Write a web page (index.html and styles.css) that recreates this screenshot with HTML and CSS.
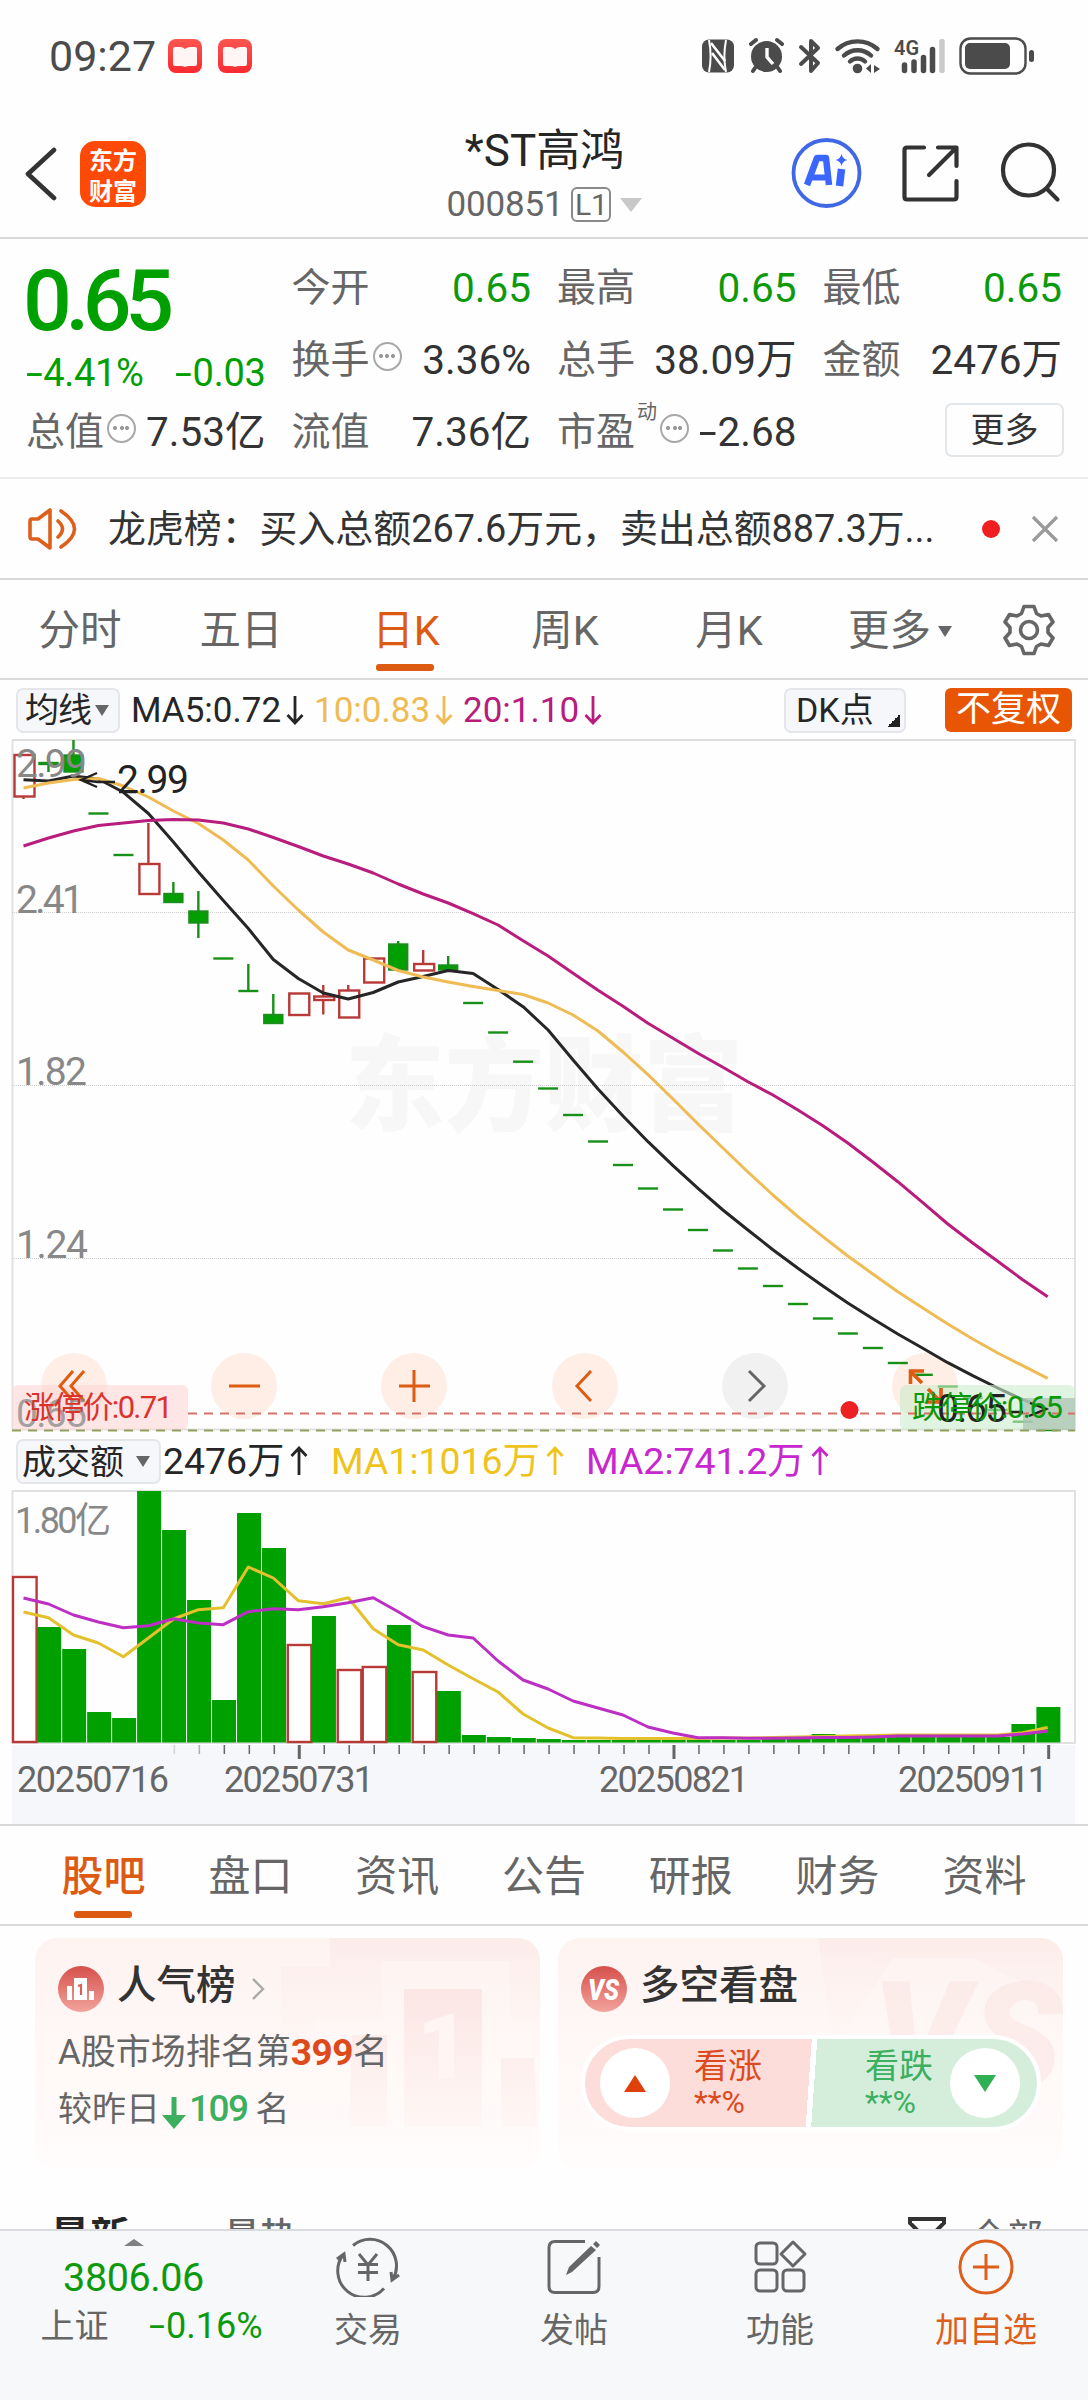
FILE: index.html
```html
<!DOCTYPE html>
<html lang="zh-CN">
<head>
<meta charset="utf-8">
<title>*ST高鸿 000851</title>
<link rel="stylesheet" href="styles.css">
</head>
<body>
<div class="phone">

<div class="status">
  <span class="clock">09:27</span>
  <svg class="notif" viewBox="0 0 84 34" width="84" height="34">
    <defs><linearGradient id="nr" x1="0" y1="0" x2="0" y2="1"><stop offset="0" stop-color="#fb5650"/><stop offset="1" stop-color="#fb2a30"/></linearGradient></defs>
    <g id="book"><rect width="34" height="34" rx="8" fill="url(#nr)"/><path d="M5 10q0-2 2-2h5q3 0 5 2 2-2 5-2h5q2 0 2 2v15q0 2-2 2h-6q-2 0-4 1-2-1-4-1H7q-2 0-2-2z" fill="#fff5f4"/></g>
    <use href="#book" x="50"/>
  </svg>
  <svg class="sysicons" viewBox="702 36 334 40" width="334" height="40" fill="#4b4b4b">
    <rect x="702" y="39.500" width="32" height="33" rx="7"/>
    <path d="M709 40c2 10 2 22 0 32M726 40c-2 10-2 22 0 32" stroke="#fff" stroke-width="2" fill="none"/><path d="M711 43l14 18M712 53l13 17" stroke="#fff" stroke-width="2.600" fill="none"/>
    <circle cx="766.500" cy="56.500" r="15.500"/><path d="M751 44l5-4M782 44l-5-4M755 68l-2 3M778 68l2 3" stroke="#4b4b4b" stroke-width="4" stroke-linecap="round"/><path d="M767 48v9l6 7" stroke="#fff" stroke-width="3.400" fill="none"/>
    <path d="M801 47l17 16-7 8V41l7 7-17 16" fill="none" stroke="#4b4b4b" stroke-width="4" stroke-linejoin="round" stroke-linecap="round"/>
    <g fill="none" stroke="#4b4b4b" stroke-width="4.400" stroke-linecap="round"><path d="M837.500 49a30 30 0 0 1 40 0M844 55.500a20 20 0 0 1 27 0M850 61.500a11 11 0 0 1 15 0"/></g>
    <circle cx="857.500" cy="68.500" r="4.800"/><path d="M871 64v9l-5-4.500zM873.500 64v9M874 65l6 4-6 4z"/>
    <text x="894" y="54.500" class="net" textLength="25" lengthAdjust="spacingAndGlyphs">4G</text>
    <g stroke="#4b4b4b" stroke-width="5.500" stroke-linecap="round"><path d="M904.500 65v5.500M914 62v8.500M923.500 57.500v13M932.500 49.500v21"/><path d="M942 41.500v29" stroke="#cbcbcb"/></g>
    <rect x="960.500" y="38.500" width="65" height="35" rx="10" fill="none" stroke="#4b4b4b" stroke-width="2.400"/><rect x="965" y="43" width="45" height="26" rx="5"/><rect x="1029" y="50" width="5" height="12" rx="2.500"/>
  </svg>
</div>

<header class="head">
  <svg class="back" viewBox="0 0 34 54" width="34" height="54"><path d="M30 3L4 27l26 24" fill="none" stroke="#333" stroke-width="4.600" stroke-linejoin="round" stroke-linecap="round"/></svg>
  <div class="logo"><span>东方</span><span>财富</span></div>
  <div class="title">
    <div class="name">*ST高鸿</div>
    <div class="code"><span>000851</span><i>L1</i><b></b></div>
  </div>
  <svg class="acts" viewBox="790 135 272 76" width="272" height="76" fill="none">
    <circle cx="826.500" cy="172" r="33" stroke="#4068e6" stroke-width="3.800"/>
    <path d="M807 184l10-27h9l3 27" stroke="#3a66ff" stroke-width="6.500" stroke-linejoin="round"/><path d="M812 176.500h16" stroke="#3a66ff" stroke-width="6"/><path d="M841.500 168l-2 17" stroke="#3a66ff" stroke-width="7.500"/><path d="M841.500 153q1 5 6 6-5 1-6 6-1-5-6-6 5-1 6-6z" fill="#3a66ff"/>
    <g stroke="#333" stroke-width="4.200" stroke-linecap="round" stroke-linejoin="round"><path d="M924 146.500h-17q-2.500 0-2.500 2.500v47q0 2.500 2.500 2.500h47q2.500 0 2.500-2.500v-16M938 146.500h18.500V165M955 148l-26 26"/><circle cx="1028.500" cy="169" r="25.500"/><path d="M1047 188l10.500 10.500"/></g>
  </svg>
</header>

<section class="quote">
  <div class="price"><div class="last">0.65</div><div class="chg"><span><u>-</u>4.41%</span><span><u>-</u>0.03</span></div></div>
  <div class="cell"><label>今开</label><span class="g">0.65</span></div>
  <div class="cell"><label>最高</label><span class="g">0.65</span></div>
  <div class="cell"><label>最低</label><span class="g">0.65</span></div>
  <div class="cell"><label>换手<i class="ring"></i></label><span>3.36%</span></div>
  <div class="cell"><label>总手</label><span>38.09万</span></div>
  <div class="cell"><label>金额</label><span>2476万</span></div>
  <div class="cell"><label>总值<i class="ring"></i></label><span>7.53亿</span></div>
  <div class="cell"><label>流值</label><span>7.36亿</span></div>
  <div class="cell"><label>市盈<sup>动</sup><i class="ring"></i></label><span><u>-</u>2.68</span></div>
  <div class="cell morecell"><button class="more">更多</button></div>
</section>

<section class="notice">
  <svg viewBox="0 0 50 44" width="50" height="44" fill="none" stroke="#dd5f1c" stroke-width="3.600" stroke-linejoin="round" stroke-linecap="round"><path d="M22 3v38L10 32H4q-2 0-2-2.500v-15Q2 12 4 12h6zM30 14q9 8 0 16M33 4q27 18 0 36"/></svg>
  <p>龙虎榜：买入总额267.6万元，卖出总额887.3万...</p>
  <i class="dot"></i>
  <svg viewBox="0 0 28 28" width="28" height="28"><path d="M2 2l24 24M26 2L2 26" stroke="#9a9a9a" stroke-width="3.200"/></svg>
</section>

<nav class="periods">
  <span>分时</span><span>五日</span><span class="on">日K</span><span>周K</span><span>月K</span><span>更多<b></b></span>
  <svg viewBox="-27 -27 54 54" width="54" height="54" fill="none" stroke="#666" stroke-width="3.600" stroke-linejoin="round"><circle r="8.500"/><path d="M-5-23.500H5L7.500-16.500 12-14 19.500-15.500 24-8 19-2.500V2.500L24 8 19.500 15.500 12 14 7.500 16.500 5 23.500H-5L-7.500 16.500-12 14-19.500 15.500-24 8-19 2.500V-2.500L-24-8-19.500-15.500-12-14-7.500-16.500z"/></svg>
</nav>

<div class="indicators">
  <button class="chip ma">均线<b></b></button>
  <span class="v1">MA5:0.72<svg class="arr" viewBox="0 0 18 30"><path d="M9 1v27M1.500 20L9 28l7.500-8"/></svg></span>
  <span class="v2">10:0.83<svg class="arr" viewBox="0 0 18 30"><path d="M9 1v27M1.500 20L9 28l7.500-8"/></svg></span>
  <span class="v3">20:1.10<svg class="arr" viewBox="0 0 18 30"><path d="M9 1v27M1.500 20L9 28l7.500-8"/></svg></span>
  <button class="chip dk">DK点<b></b></button>
  <button class="adj">不复权</button>
</div>

<svg class="chart" viewBox="0 739 1088 694" width="1088" height="694">
  <text class="wm" x="345" y="1123" textLength="398" lengthAdjust="spacingAndGlyphs">东方财富</text>
  <g fill="none"><path d="M12.500 740V1431M1075 740V1431" stroke="#e2e2e4" stroke-width="2"/><path d="M12 740H1076M12 1429.500H1076" stroke="#dfdfe1" stroke-width="2"/>
  <path d="M12 912.500H1075M12 1085.500H1075M12 1258.500H1075" stroke="#cfcfcf" stroke-width="1" stroke-dasharray="1 1"/></g>
  <g class="pads">
    <circle cx="74" cy="1386" r="33"/><circle cx="244" cy="1386" r="33"/><circle cx="414" cy="1386" r="33"/><circle cx="585" cy="1386" r="33"/><circle cx="755" cy="1386" r="33" class="off"/><circle cx="925" cy="1386" r="33"/>
  </g>
  <g id="candles"></g>
  <g id="averages"></g>
  <rect x="12" y="1385" width="176" height="45" rx="6" fill="#fcd9d7" opacity=".65"/>
  <rect x="900" y="1385" width="175" height="45" rx="6" fill="#cdebcd" opacity=".6"/>
  <rect x="1023" y="1398" width="52" height="32" fill="#a9c0b0" opacity=".7"/>
  <path d="M188 1413.500H1075" stroke="#d4736c" stroke-width="1.800" stroke-dasharray="9 7"/>
  <path d="M12 1430.500H1075" stroke="#8fa060" stroke-width="1.800" stroke-dasharray="9 7"/>
  <g class="padicons"><path d="M73 1371L60 1386l13 15M84 1371l-13 15 13 15M229 1386h31M399 1386h31M414 1370v32M591 1371l-14 15 14 15"/><path d="M749 1371l15 15-15 15" stroke="#666"/><path d="M910.500 1384v-13H924M911 1372l11 11M941 1388v14H927M940 1401l-12-12" stroke-width="3.600"/></g>
  <g class="axis">
    <text x="16" y="777" textLength="71">2.99</text><text x="16" y="912.500" textLength="68">2.41</text><text x="16" y="1085" textLength="71">1.82</text><text x="16" y="1258" textLength="72">1.24</text><text x="16" y="1426.500" textLength="71" opacity=".75">0.65</text>
    <text x="117" y="793" textLength="72" class="blk">2.99</text><text x="937" y="1422" textLength="70" class="blk">0.65</text>
  </g>
  <path d="M97 773l-16 7 16 7M81 780l17 2h17M119 792h17M1009 1412h14M1030 1403l16 6-17 7" fill="none" stroke="#222" stroke-width="2.400"/>
  <circle cx="849.500" cy="1410" r="9" fill="#ee2023"/>
  <text x="24" y="1418" class="lim" fill="#dc322d" textLength="149">涨停价:0.71</text>
  <text x="912" y="1418" class="lim" fill="#089a08" textLength="151">跌停价:0.65</text>
</svg>

<div class="indicators vol">
  <button class="chip amt">成交额<b></b></button>
  <span class="w1">2476万<svg class="arr" viewBox="0 0 18 30"><path d="M9 29V2M1.500 10L9 2l7.500 8"/></svg></span>
  <span class="w2">MA1:1016万<svg class="arr" viewBox="0 0 18 30"><path d="M9 29V2M1.500 10L9 2l7.500 8"/></svg></span>
  <span class="w3">MA2:741.2万<svg class="arr" viewBox="0 0 18 30"><path d="M9 29V2M1.500 10L9 2l7.500 8"/></svg></span>
</div>

<svg class="chart" viewBox="0 1489 1088 335" width="1088" height="335">
  <rect x="12" y="1745" width="1063" height="79" fill="#f6f7fa"/>
  <path d="M12.500 1491V1743M1075 1491V1743M12 1491H1076M12 1743H1076" stroke="#e1e1e3" stroke-width="2" fill="none"/>
  <text x="15" y="1533" class="vmax" textLength="96">1.80亿</text>
  <g id="volumes"></g>
  <g id="ticks"></g>
  <g class="dates"><text x="17" y="1792" textLength="152">20250716</text><text x="224" y="1792" textLength="150">20250731</text><text x="599" y="1792" textLength="150">20250821</text><text x="898" y="1792" textLength="150">20250911</text></g>
</svg>

<nav class="sections"><span class="on">股吧</span><span>盘口</span><span>资讯</span><span>公告</span><span>研报</span><span>财务</span><span>资料</span></nav>

<div class="cards">
  <article class="card">
    <svg class="art" viewBox="35 1938 505 231" width="505" height="231"><defs><linearGradient id="fade" x1="0" y1="0" x2="0" y2="1"><stop offset="0" stop-color="#f9dedb" stop-opacity=".65"/><stop offset="1" stop-color="#fbe6e3" stop-opacity=".2"/></linearGradient><linearGradient id="fade2" x1="0" y1="0" x2="0" y2="1"><stop offset="0" stop-color="#fbe5e2" stop-opacity=".5"/><stop offset="1" stop-color="#fff5f3" stop-opacity="0"/></linearGradient></defs>
      <path d="M281 1967h49v-29h210v80h-30v-57H381v58h-65v60h-35z" fill="url(#fade2)"/>
      <path d="M404 1989h78v138h-78zM352 2035h35v92h-38zM501 2058h33l3 69h-36z" fill="url(#fade)"/>
      <text x="417" y="2078" class="artone">1</text>
    </svg>
    <h3><svg viewBox="0 0 46 46" width="46" height="46"><defs><linearGradient id="ic" x1="0" y1="0" x2="0" y2="1"><stop offset="0" stop-color="#d6504b"/><stop offset="1" stop-color="#f2a39c"/></linearGradient></defs><circle cx="23" cy="23" r="23" fill="url(#ic)"/><path d="M9 20h5v14H9zM16 12h13v22H16zM31 25h5v9h-5z" fill="#fff"/><path d="M20 20l3-1v10" stroke="#d9605a" stroke-width="2.200" fill="none"/></svg><span>人气榜</span><svg class="chev" viewBox="0 0 14 24" width="14" height="24"><path d="M2 2l10 10L2 22" fill="none" stroke="#aaa" stroke-width="2.400"/></svg></h3>
    <p class="l1">A股市场排名第<b>399</b>名</p>
    <p class="l2">较昨日<svg viewBox="0 0 24 34" width="24" height="34"><path d="M9.500 1h5v18H24L12 33 0 19h9.500z" fill="#3caf60"/></svg><b>109</b>名</p>
  </article>
  <article class="card">
    <svg class="art" viewBox="558 1938 505 231" width="505" height="231"><path d="M818 1938h245v120l-30-70-60-30h-80l-60 90z" fill="url(#fade2)"/><text x="872" y="2088" class="artvs" textLength="190">VS</text></svg>
    <h3><svg viewBox="0 0 46 46" width="46" height="46"><circle cx="23" cy="23" r="23" fill="url(#ic)"/><text x="7" y="34" class="vs" textLength="31" lengthAdjust="spacingAndGlyphs">VS</text></svg><span>多空看盘</span></h3>
    <div class="vote">
      <div class="half up"><i></i><span>看涨<small>**%</small></span></div>
      <div class="half down"><span>看跌<small>**%</small></span><i></i></div>
    </div>
  </article>
</div>

<div class="feed"><b>最新</b><span class="hot">最热</span><svg viewBox="0 0 38 34" width="38" height="34"><path d="M2 2h34v4L24 18v12l-10-5v-7L2 6z" fill="none" stroke="#333" stroke-width="4"/></svg><span>全部</span></div>

<footer class="bottom">
  <div class="index"><b class="tri"></b><div class="pts">3806.06</div><div class="row"><span>上证</span><em><u>-</u>0.16%</em></div></div>
  <div class="item"><svg viewBox="-32 -30 64 60" width="64" height="60" fill="none" stroke="#666" stroke-width="3"><path d="M-15-21.500A26.500 26.500 0 0 1 25 12M16 21.500A26.500 26.500 0 0 1-25-12M-31-8l7-5 1 8M31 8l-7 5-1-8M-9-13L0-2 9-13M0-2V14M-10-2.500H10M-10 5.500H10"/></svg>交易</div>
  <div class="item"><svg viewBox="-32 -30 64 60" width="64" height="60" fill="none" stroke="#666" stroke-width="3"><path d="M11-25.500H-19Q-25-25.500-25-19.500V19.500Q-25 25.500-19 25.500H19Q25 25.500 25 19.500V-10"/><path d="M-8 8l3-8L17-21l5 4L-2 5zM19-23l3-3 4 4-3 3z" fill="#666" stroke="none"/></svg>发帖</div>
  <div class="item"><svg viewBox="-32 -30 64 60" width="64" height="60" fill="none" stroke="#666" stroke-width="3" stroke-linejoin="round"><rect x="-24" y="-24" width="21" height="21" rx="4"/><rect x="-24" y="3" width="21" height="21" rx="4"/><rect x="3" y="3" width="21" height="21" rx="4"/><path d="M13-25L25-13 13-1 1-13z"/></svg>功能</div>
  <div class="item add"><svg viewBox="-32 -30 64 60" width="64" height="60" fill="none" stroke="#dd5f1c" stroke-width="3"><circle r="26"/><path d="M-13 0H13M0-13V13"/></svg>加自选</div>
</footer>
</div>
<script src="chart.js"></script>
</body>
</html>
```

FILE: styles.css
```css
* { box-sizing: border-box; }
body { margin: 0; background: #fefefe; font-family: Roboto, "Noto Sans CJK SC", sans-serif; color: #333; }
.phone { width: 1088px; height: 2400px; overflow: hidden; display: flex; flex-direction: column; }
.phone > * { flex: none; }
button { font: inherit; color: inherit; padding: 0; margin: 0; border: 0; background: none; }
i, em { font-style: normal; }
u { display: inline-block; text-decoration: none; transform: scaleX(1.6); margin: 0 4px 0 3px; }
p, h3 { margin: 0; }
.chart { display: block; }

.status { height: 92px; padding: 19px 52px 0 49px; display: flex; align-items: center; }
.clock { font-size: 43px; line-height: 74px; color: #4b4b4b; width: 119px; }
.sysicons { margin-left: auto; }
.net { font-size: 21px; font-weight: 600; }

.head { height: 147px; border-bottom: 2px solid #dadada; display: flex; align-items: center; padding: 19px 26px 0 24px; }
.logo { width: 66px; height: 66px; margin-left: 22px; border-radius: 15px; background: #ff4a05; color: #fff; font: 700 24px/31px "Noto Sans CJK SC", sans-serif; display: flex; flex-direction: column; align-items: center; justify-content: center; }
.title { flex: 1; display: flex; flex-direction: column; align-items: center; padding: 5px 0 0 153px; }
.name { font-size: 44px; line-height: 56px; color: #262626; }
.code { display: flex; align-items: center; font-size: 35px; line-height: 52px; color: #666; }
.code span { letter-spacing: -0.2px; }
.code i { width: 40px; height: 35px; margin-left: 8px; border: 2px solid #8a8a8a; border-radius: 6px; font-size: 30px; line-height: 32px; text-align: center; }
.code b { border: 11px solid transparent; border-top: 14px solid #c8c8c8; border-bottom: 0; margin-left: 9px; }

.quote { height: 240px; border-bottom: 2px solid #ececec; padding: 13px 26px 0; display: grid; grid-template-columns: repeat(4, 239.5px); grid-template-rows: repeat(3, 72px); column-gap: 26px; line-height: 72px; font-size: 40.5px; }
.price { grid-row: span 2; color: #00a000; }
.last { font-size: 86px; font-weight: 500; line-height: 98px; letter-spacing: -6.5px; margin-left: -3px; }
.chg { display: flex; justify-content: space-between; font-size: 38px; line-height: 46px; letter-spacing: -0.3px; }
.cell { display: flex; justify-content: space-between; white-space: nowrap; }
.cell label { color: #666; font-size: 39px; display: flex; align-items: baseline; }
.cell .g { color: #0c9a0c; }
.ring { width: 29px; height: 29px; border: 2.5px solid #a8a8a8; border-radius: 50%; margin-left: 3px; align-self: center; position: relative; top: -4px; background: radial-gradient(circle, #999 1.8px, transparent 2.3px) center / 6px 6px no-repeat, radial-gradient(circle, #999 1.8px, transparent 2.3px) 3px 50% / 6px 6px no-repeat, radial-gradient(circle, #999 1.8px, transparent 2.3px) 15px 50% / 6px 6px no-repeat; }
sup { font-size: 20px; line-height: 20px; align-self: flex-start; margin: 6px 0 0 2px; }
.morecell { justify-content: flex-end; align-items: center; }
.more { width: 119px; height: 54px; border: 2px solid #e3e6e8; border-radius: 7px; font-size: 34px; line-height: 48px; margin: -4px -2px 0 0; }

.notice { height: 101px; border-bottom: 2px solid #d8d8d8; display: flex; align-items: center; padding: 0 29px 0 28px; font-size: 37.9px; line-height: 90px; }
.notice p { margin-left: 30px; width: 873px; white-space: nowrap; }
.dot { width: 18px; height: 18px; border-radius: 50%; background: #f02020; margin-left: 1px; margin-right: auto; }

.periods { height: 100px; border-bottom: 2px solid #dadada; display: grid; grid-template-columns: 160px 162px 168px 150px 178px 164px 94px; justify-items: center; align-items: center; font-size: 41.5px; color: #666; line-height: 98px; }
.periods span { position: relative; display: flex; align-items: center; padding-top: 2px; }
.on { color: #dd5a12; }
.on::after { content: ""; position: absolute; left: calc(50% - 29.500px); top: 84px; width: 58px; height: 7px; border-radius: 3px; background: #dd5a12; }
.periods b { border: 7px solid transparent; border-top: 11px solid #666; border-bottom: 0; margin-left: 7px; }

.indicators { height: 59px; display: flex; align-items: center; font-size: 36px; padding: 1px 16px 0; white-space: nowrap; }
.indicators span { display: flex; align-items: center; }
.chip { height: 45px; background: #f6f7fa; border: 2px solid #e4e6ea; border-radius: 7px; display: flex; align-items: center; font-size: 34px; line-height: 40px; color: #262626; }
.chip b { border: 7px solid transparent; border-top: 11px solid #666; border-bottom: 0; }
.ma { width: 104px; padding-left: 7px; letter-spacing: -1px; }
.ma b { margin-left: 4px; }
.arr { width: 18px; height: 30px; fill: none; stroke: currentColor; stroke-width: 2.800px; margin-left: 5px; }
.v1 { color: #262626; width: 183px; margin-left: 11px; font-size: 35px; }
.v2 { color: #efbb54; width: 149px; font-size: 35px; }
.v3 { color: #b81c7c; font-size: 35px; }
.dk { width: 122px; margin-left: auto; padding-left: 10px; position: relative; }
.dk b { border: 0; width: 13px; height: 13px; background: linear-gradient(135deg, transparent 50%, #222 50%); position: absolute; right: 4px; bottom: 4px; }
.adj { width: 127px; height: 44px; background: #e85504; border-radius: 6px; color: #fff; font-size: 35px; line-height: 42px; margin-left: 39px; }

.wm { font: 900 104px "Noto Sans CJK SC", sans-serif; fill: #f7f7f8; }
.pads { fill: #feeee5; }
.off { fill: #f1f1f1; }
.padicons { fill: none; stroke: #de5b12; stroke-width: 3px; }
.axis { font-size: 39px; fill: #888; }
.blk { fill: #222; }
.lim { font-size: 31px; }
.candle { stroke-width: 2.4px; }
.up-c { fill: #fff; stroke: #b83a38; }
.dn-c { fill: #00a000; stroke: #169016; }
.line { fill: none; stroke-width: 3px; stroke-linejoin: round; }
.vmax { font-size: 36px; fill: #888; }
.dates { font-size: 36px; fill: #666; }

.vol { height: 56px; align-items: flex-start; padding-top: 6px; line-height: 44px; font-size: 37.4px; }
.vol .arr { margin-top: 7px; margin-left: 6px; }
.vol span { align-items: flex-start; }
.amt { width: 145px; padding-left: 4px; }
.amt b { margin-left: 12px; }
.w1 { margin-left: 2px; width: 168px; color: #262626; }
.w2 { width: 255px; color: #eec41c; }
.w3 { color: #c826ce; }

.sections { height: 102px; border-top: 2px solid #d8d8d8; border-bottom: 2px solid #dadada; display: grid; grid-template-columns: repeat(7, 146.800px); justify-content: center; justify-items: center; font-size: 42px; line-height: 101px; color: #666; }
.sections span { position: relative; }
.sections .on { color: #dd5a12; font-weight: 500; }
.sections .on::after { top: 85px; }

.cards { height: 291px; padding: 12px 25px 0 35px; display: flex; gap: 18px; }
.card { position: relative; width: 505px; height: 231px; border-radius: 22px; padding: 28px 23px 0; background: linear-gradient(#fdf3f1, #fff9f8 60%, #fffcfb); overflow: hidden; color: #666; }
.card > * { position: relative; }
.card .art { position: absolute; left: 0; top: 0; }
.card h3 { display: flex; align-items: center; height: 46px; font-size: 39.500px; line-height: 42px; font-weight: 500; color: #333; }
.card h3 span { margin: 0 0 6px 13px; }
.chev { margin-left: 15px; }
.artone { font: 900 90px Roboto, sans-serif; fill: #fff6f4; }
.artvs { font: italic 900 150px Roboto, sans-serif; fill: #fae3e1; opacity: .55; }
.vs { font: italic 900 29px Roboto, sans-serif; fill: #fff; }
.card p { display: flex; align-items: center; font-size: 35px; line-height: 56px; }
.card p b { font-size: 37px; letter-spacing: -0.5px; }
.l1 { margin-top: 13px; }
.l1 b { color: #dd4a1c; }
.card .l2 b { color: #3caf60; font-weight: 500; margin-right: 8px; letter-spacing: -1.5px; }
.l2 svg { margin: 8px 3px 0 2px; }
.card .l2 { font-size: 34px; }
.vote { width: 460px; height: 96px; margin: 23px 0 0 0; border: 4px solid #fff; border-radius: 48px; background: linear-gradient(94deg, #fdddda 49.500%, #fff 49.500%, #fff 50.700%, #d5eedc 50.700%); display: flex; justify-content: space-between; }
.half { display: flex; align-items: center; font-size: 34px; line-height: 37px; }
.half i { width: 70px; height: 70px; border-radius: 50%; background: #fff; display: grid; place-items: center; }
.half i::before { content: ""; border: 11px solid transparent; }
.up { color: #dc4a20; padding-left: 15px; gap: 24px; }
.up i::before { border-bottom: 17px solid #e0400c; border-top: 0; }
.down { color: #3caf60; padding-right: 17px; gap: 17px; }
.down i::before { border-top: 17px solid #2fb055; border-bottom: 0; }
small { display: block; font-size: 32px; line-height: 34px; }

.feed { height: 12px; overflow: hidden; display: flex; align-items: flex-start; padding: 0 45px 0 50px; color: #666; font-size: 36px; line-height: 40px; }
.feed b { color: #262626; font-size: 40px; font-weight: 700; }
.feed .hot { margin-left: 94px; margin-right: auto; font-weight: 500; }
.feed svg { margin-right: 25px; }
.feed span:last-child { padding-top: 1px; }

.bottom { height: 171px; border-top: 2px solid #d9dbde; background: #f6f8fa; display: grid; grid-template-columns: 264px 208px 204px 208px 204px; color: #666; font-size: 34px; }
.index { display: flex; flex-direction: column; align-items: center; padding: 8px 0 0 3px; color: #0c9a0c; }
.tri { border: 10px solid transparent; border-bottom: 7px solid #808080; border-top: 0; }
.pts { font-size: 39.5px; line-height: 46px; margin-top: 9px; letter-spacing: -0.4px; }
.row { display: flex; width: 222px; justify-content: space-between; color: #666; line-height: 50px; margin: 0 0 0 36px; }
.row em { color: #0c9a0c; font-size: 36px; }
.item { display: flex; flex-direction: column; align-items: center; padding-top: 6px; line-height: 66px; }
.add { color: #dd5f1c; }
```

FILE: chart.js
```js
const NS = "http://www.w3.org/2000/svg";
const X0 = 23.5, STEP = 24.98;
const cx = i => X0 + STEP * i;

function add(parent, tag, attrs) {
  const el = document.createElementNS(NS, tag);
  for (const k in attrs) el.setAttribute(k, attrs[k]);
  parent.appendChild(el);
}
function line(parent, ys, colour) {
  add(parent, "polyline", { class: "line", stroke: colour, points: ys.map((y, i) => cx(i).toFixed(1) + "," + y).join(" ") });
}

/* [direction, body top, body bottom, wick top, wick bottom] */
const candles = [
  ["u", 755, 796.5, 755, 799], ["d", 763, 764, 756, 772], ["d", 755.5, 771.5, 740, 772], ["d", 813.5], ["d", 855],
  ["u", 864, 894, 823, 894], ["d", 894, 902, 882, 902], ["d", 911.5, 922.5, 891, 938], ["d", 958.5], ["d", 991, 991, 964, 991],
  ["d", 1015, 1023, 994, 1023], ["u", 993.5, 1015, 993.5, 1015], ["u", 996.5, 1000, 985, 1014.5], ["u", 990.5, 1017.5, 985, 1017],
  ["u", 958.5, 982.5, 958, 982], ["d", 944.5, 969.5, 941, 972], ["u", 964, 970.5, 950, 970], ["d", 965.5, 969.5, 956, 970],
  ...[1003, 1032.5, 1061.7, 1088.5, 1115, 1141.5, 1165, 1188.5, 1209.5, 1230, 1250.5, 1268.5, 1286, 1304, 1318.5, 1333.5, 1348, 1363, 1374.8, 1386.5, 1398, 1410, 1421.7, 1430].map(y => ["d", y])
];
const cg = document.getElementById("candles");
candles.forEach(([dir, top, bottom = top, w1 = top, w2 = bottom], i) => {
  const cls = "candle " + (dir === "u" ? "up-c" : "dn-c"), x = cx(i);
  if (w2 > w1) add(cg, "path", { class: cls, d: `M${x} ${w1}V${w2}` });
  if (bottom > top) add(cg, "rect", { class: cls, x: x - 9, y: top, width: dir === "u" ? 20 : 18, height: bottom - top });
  else add(cg, "path", { class: cls, d: `M${x - 10} ${top}h20` });
});

const ag = document.getElementById("averages");
line(ag, [779.7, 781, 776, 779, 792.3, 813.5, 842, 872, 900.5, 928.5, 959.5, 978.5, 993, 999, 992.5, 982, 976.5, 970.5, 973.5, 989.5, 1006.7, 1030, 1060, 1089, 1116, 1141.7, 1165.7, 1188.3, 1210, 1230, 1249.7, 1268.3, 1286, 1303, 1318.7, 1334, 1348.3, 1362.7, 1375.7, 1388, 1399.7, 1409], "#262626");
line(ag, [788, 783, 779.5, 778.5, 786, 797, 811, 823.5, 840, 860, 886, 910, 932, 950, 960, 970.5, 977, 982, 986.5, 990.5, 994.5, 1003, 1015, 1031, 1052, 1074.7, 1099, 1124, 1148, 1172, 1195, 1216.7, 1236.7, 1256, 1274, 1291.7, 1308, 1324, 1339, 1353, 1365.7, 1378.3], "#efbb54");
line(ag, [846, 838, 831, 825.5, 823, 820.5, 819.5, 820, 823, 829, 837.5, 846.5, 856, 864, 873, 884, 894, 903, 913.7, 925, 940.7, 956, 973.3, 990.3, 1006.3, 1023.3, 1038.3, 1053.3, 1067.3, 1081.7, 1095, 1110, 1125.7, 1143, 1162, 1181.7, 1202.7, 1224, 1243, 1261.3, 1279.7, 1296.7], "#b81c7c");

/* tops of the turnover bars, hollow on rising days */
const tops = [1577, 1627, 1649, 1712, 1718, 1491, 1530, 1600, 1700, 1513, 1548, 1645, 1616, 1670, 1667, 1625, 1672, 1691, 1735, 1737, 1738, 1739, 1740, 1740, 1740, 1737, 1740, 1740, 1740, 1740, 1739, 1739, 1734, 1738, 1738, 1737, 1737, 1737, 1737, 1737, 1724, 1707];
const hollow = new Set([0, 11, 13, 14, 16]);
const vg = document.getElementById("volumes");
tops.forEach((y, i) => {
  const x = 12.2 + STEP * i;
  if (hollow.has(i)) add(vg, "rect", { class: "candle up-c", x: x + .8, y, width: 23.6, height: 1742 - y });
  else add(vg, "rect", { fill: "#00a000", x, y, width: 24, height: 1742.5 - y });
});
line(vg, [1612, 1617.7, 1635, 1643, 1656.7, 1638, 1619, 1609.7, 1607.7, 1567, 1578, 1600.7, 1603.7, 1597.7, 1628.7, 1644.7, 1650, 1665, 1678.7, 1692, 1714, 1728, 1737.7, 1738, 1738.5, 1738.5, 1738.5, 1738.5, 1738, 1738, 1737.5, 1737, 1736.5, 1736, 1735.5, 1735, 1735, 1735, 1735, 1735, 1732.7, 1727.5], "#e3c02c");
line(vg, [1598, 1604, 1615, 1622, 1627.7, 1625.7, 1618.7, 1623, 1624.7, 1611.7, 1608.7, 1609.7, 1606.7, 1602.7, 1597.7, 1611.7, 1626.7, 1635, 1638, 1661, 1680, 1689, 1701, 1708, 1715, 1727, 1733, 1737.7, 1737.7, 1738.3, 1738.3, 1738, 1737.5, 1737.5, 1737, 1736, 1736, 1736, 1736, 1736, 1734, 1731], "#bd2fc4");

const tg = document.getElementById("ticks");
for (let i = 6; i < 42; i++) {
  const major = i === 11 || i === 26 || i === 41;
  add(tg, "path", { d: `M${cx(i) + 1} 1745V${major ? 1759 : 1754}`, stroke: "#666", "stroke-width": major ? 3 : 1.5, opacity: i < 8 ? (i - 5) * .25 : 1 });
}
```
